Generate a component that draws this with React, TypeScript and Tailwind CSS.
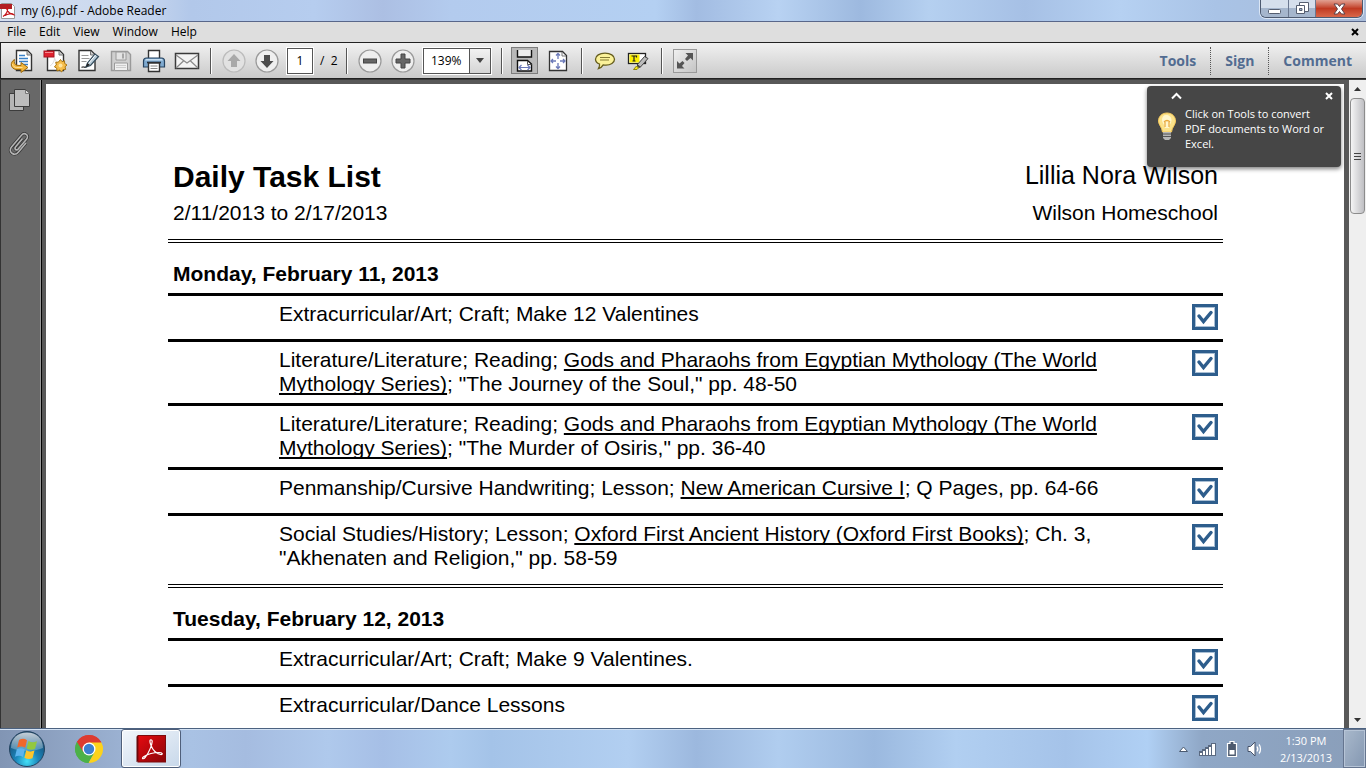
import type { ReactNode } from "react";

type Part = string | { title: string };
type Task = { parts: Part[] };
type Day = { heading: string; tasks: Task[] };

const gods = "Gods and Pharaohs from Egyptian Mythology (The World Mythology Series)";

const days: Day[] = [
  {
    heading: "Monday, February 11, 2013",
    tasks: [
      { parts: ["Extracurricular/Art; Craft; Make 12 Valentines"] },
      { parts: ["Literature/Literature; Reading; ", { title: gods }, '; "The Journey of the Soul," pp. 48-50'] },
      { parts: ["Literature/Literature; Reading; ", { title: gods }, '; "The Murder of Osiris," pp. 36-40'] },
      { parts: ["Penmanship/Cursive Handwriting; Lesson; ", { title: "New American Cursive I" }, "; Q Pages, pp. 64-66"] },
      {
        parts: [
          "Social Studies/History; Lesson; ",
          { title: "Oxford First Ancient History (Oxford First Books)" },
          '; Ch. 3, "Akhenaten and Religion," pp. 58-59',
        ],
      },
    ],
  },
  {
    heading: "Tuesday, February 12, 2013",
    tasks: [
      { parts: ["Extracurricular/Art; Craft; Make 9 Valentines."] },
      { parts: ["Extracurricular/Dance Lessons"] },
    ],
  },
];

const menus = ["File", "Edit", "View", "Window", "Help"];

function Svg({ w, h, children }: { w: number; h: number; children: ReactNode }) {
  return (
    <svg width={w} height={h} viewBox={`0 0 ${w} ${h}`} fill="none" aria-hidden="true" className="shrink-0">
      {children}
    </svg>
  );
}

function ToolButton({ label, children }: { label: string; children: ReactNode }) {
  return (
    <button type="button" aria-label={label} className="flex h-7 w-[33px] shrink-0 items-center justify-center">
      {children}
    </button>
  );
}

function Divider() {
  return <span className="mr-1.5 ml-[7px] h-[26px] w-px shrink-0 bg-[#555] shadow-[1px_0_0_#fff]" />;
}

function PageOutline() {
  return <path d="M6.5 1.5h11l4 4v16h-15z" fill="#fff" stroke="#333" strokeWidth="1.4" />;
}

function ConvertIcon() {
  return (
    <Svg w={24} h={24}>
      <PageOutline />
      <path d="M17 2v4h4" fill="#ccc" stroke="#777" />
      <path d="M9 6.5h6M9 9.5h9M9 12.5h9M12 15.5h6" stroke="#3a82c9" strokeWidth="1.3" />
      <path
        d="M4.500 10.500C0 13 0 19.500 6 20.500h5v3l7-5-7-5v3l-4-.2c-2.500-.8-3.300-3-2.500-5.800z"
        fill="#f2b63c"
        stroke="#9a6a12"
      />
      <path d="M2.500 15c.5 2.500 2 3.300 4 3.500h6" stroke="#ffe29a" />
    </Svg>
  );
}

function CreatePdfIcon() {
  return (
    <Svg w={24} h={24}>
      <path d="M4.500 1.500h12l4 4v16h-16z" fill="#fff" stroke="#333" strokeWidth="1.400" />
      <path d="M16 2v4h4" fill="#ccc" stroke="#777" />
      <path d="M7 17c3-2 4.500-5 4.500-8 1.500 4 3 5.500 6.500 6" stroke="#ddd" />
      <rect x="1" y="2" width="10" height="6" fill="#e02230" stroke="#a51420" />
      <path d="M2 3.500h8" stroke="#f58a90" />
      <path
        d="M17.500 10.500l1.500 2.200 2.500-.9.200 2.700 2.300 1.500-2 1.800.7 2.600-2.700.2-1.400 2.300-2-1.800-2.600.8-.3-2.700-2.300-1.500 2-1.800-.7-2.600 2.700-.2z"
        fill="#f6bd4b"
        stroke="#a97512"
      />
      <circle cx="17.500" cy="16.500" r="2" fill="#ffe5a0" />
    </Svg>
  );
}

function SignIcon() {
  return (
    <Svg w={24} h={24}>
      <path d="M3 1.500h12l4 4v16H3z" fill="#fff" stroke="#333" strokeWidth="1.400" />
      <path d="M14.500 2v4h4" fill="#ccc" stroke="#777" />
      <path d="M5.500 6.500h7M5.500 9.500h8M5.500 12.500h5" stroke="#999" />
      <path d="M5.500 18.500c2.500-2 2.500 1 5-.8" stroke="#444" strokeWidth="1.300" />
      <path d="M10 18l1.500-4 7.500-9 3.500 2.500-8 9z" fill="#b8cbd8" stroke="#344c5c" strokeWidth="1.200" />
      <path d="M12.500 14.500l7-8.500" stroke="#fff" />
      <path d="M10 18l1.500-4 2.500 2z" fill="#222" />
    </Svg>
  );
}

function SaveIcon() {
  return (
    <Svg w={22} h={22}>
      <path d="M1.500 1.500h16l3 3v16h-19z" fill="#cfcfcf" stroke="#9a9a9a" strokeWidth="1.400" />
      <path d="M6 2h10v8H6z" fill="#e3e3e3" stroke="#9a9a9a" />
      <path d="M12 3.500h2v5h-2z" fill="#a6a6a6" />
      <path d="M4.500 13h13v7.500h-13z" fill="#efefef" stroke="#9a9a9a" />
      <path d="M6.500 15.500h9M6.500 17.500h9" stroke="#aaa" strokeDasharray="1 1" />
    </Svg>
  );
}

function PrintIcon() {
  return (
    <Svg w={24} h={24}>
      <path d="M6.500 10v-8.500h11V10" fill="#fff" stroke="#333" strokeWidth="1.400" />
      <path d="M1.500 12c0-2 1-3 3-3h15c2 0 3 1 3 3v6h-21z" fill="#7ea9cf" stroke="#27435f" strokeWidth="1.200" />
      <path d="M3 11.500c.5-1 1-1.500 2-1.500h14c1 0 1.500.5 2 1.500z" fill="#c7dff2" />
      <path d="M5 13.500h14" stroke="#1c2b3a" strokeWidth="1.600" />
      <path d="M6.500 14h11v8.500h-11z" fill="#fff" stroke="#333" strokeWidth="1.400" />
      <path d="M8.500 17h7M8.500 19.500h7" stroke="#888" />
    </Svg>
  );
}

function MailIcon() {
  return (
    <Svg w={26} h={18}>
      <rect x="1.500" y="1.500" width="23" height="15" fill="#f4f4f4" stroke="#3a3a3a" strokeWidth="1.500" />
      <path d="M2 3l11 8 11-8M2 16l8-7.500M24 16l-8-7.500" stroke="#8a8a8a" strokeWidth="1.200" />
    </Svg>
  );
}

function RoundIcon({ kind }: { kind: "up" | "down" | "minus" | "plus" }) {
  const shapes = {
    up: <path d="M12 5l6.500 7H15v6H9v-6H5.500z" fill="#a9a9a9" />,
    down: <path d="M12 19l6.500-7H15V6H9v6H5.500z" fill="#4d4d4d" />,
    minus: <rect x="5.500" y="10" width="13" height="4" fill="#666" stroke="#444" />,
    plus: <path d="M10 5h4v5h5v4h-5v5h-4v-5H5v-4h5z" fill="#666" stroke="#444" />,
  };
  return (
    <Svg w={24} h={24}>
      <circle cx="12" cy="12" r="11" fill={kind === "up" ? "#e2e2e2" : "#efefef"} stroke={kind === "up" ? "#bbb" : "#999"} strokeWidth="1.200" />
      {shapes[kind]}
    </Svg>
  );
}

function Toolbar() {
  return (
    <div className="flex h-[37px] shrink-0 items-center border-y border-l border-[#222] bg-linear-to-b from-[#f1f1f1] to-[#cacaca] pl-1">
      <ToolButton label="Convert file"><ConvertIcon /></ToolButton>
      <ToolButton label="Create PDF"><CreatePdfIcon /></ToolButton>
      <ToolButton label="Sign document"><SignIcon /></ToolButton>
      <ToolButton label="Save"><SaveIcon /></ToolButton>
      <ToolButton label="Print"><PrintIcon /></ToolButton>
      <ToolButton label="Email"><MailIcon /></ToolButton>
      <Divider />
      <ToolButton label="Previous page"><RoundIcon kind="up" /></ToolButton>
      <ToolButton label="Next page"><RoundIcon kind="down" /></ToolButton>
      <input
        aria-label="Page number"
        defaultValue="1"
        className="ml-1 h-[26px] w-[26px] shrink-0 border border-[#555] bg-white text-center text-xs shadow-[0_0_0_1px_#fff]"
      />
      <span className="ml-[7px] w-[19px] shrink-0 text-xs whitespace-pre">/  2</span>
      <Divider />
      <ToolButton label="Zoom out"><RoundIcon kind="minus" /></ToolButton>
      <ToolButton label="Zoom in"><RoundIcon kind="plus" /></ToolButton>
      <div className="ml-1 grid h-[26px] w-[68px] shrink-0 grid-cols-[45px_1fr] border border-[#555] bg-white shadow-[0_0_0_1px_#fff]">
        <select
          aria-label="Zoom level"
          className="col-span-2 col-start-1 row-start-1 appearance-none bg-transparent pl-[7px] text-xs"
        >
          <option>139%</option>
        </select>
        <span className="pointer-events-none col-start-2 row-start-1 flex items-center justify-center border-l border-[#555] bg-linear-to-b from-[#f2f2f2] to-[#d5d5d5]">
          <Svg w={8} h={5}><path d="M0 0h8L4 5z" fill="#444" /></Svg>
        </span>
      </div>
      <span className="w-[3px] shrink-0" />
      <Divider />
      <ToolButton label="Scrolling pages">
        <span className="flex size-[27px] items-center justify-center border border-[#7d7d7d] bg-[#b9b9b9]">
          <Svg w={19} h={23}>
            <path d="M2.500 1v7h14V1" fill="#eee" stroke="#111" strokeWidth="1.400" />
            <path d="M2.500 22V11.500h10l4 3.500v7z" fill="#fff" stroke="#111" strokeWidth="1.400" />
            <path d="M12.500 12v3.500h4" stroke="#555" />
            <path d="M4 18.500h11M6.500 16l-2.500 2.500L6.500 21M12.500 16l2.500 2.500-2.500 2.500" stroke="#6b79b8" strokeWidth="1.200" />
          </Svg>
        </span>
      </ToolButton>
      <ToolButton label="Fit one full page">
        <Svg w={20} h={22}>
          <path d="M1.500 1.500h13l4 4v15h-17z" fill="#fff" stroke="#333" strokeWidth="1.300" />
          <path d="M14 2v4h4" stroke="#777" />
          <path
            d="M10 3.500V9M10 13v5.500M3 11h5M12 11h5M8 5.500l2-2 2 2M8 16.500l2 2 2-2M5 9l-2 2 2 2M15 9l2 2-2 2"
            stroke="#6b79b8"
            strokeWidth="1.300"
          />
        </Svg>
      </ToolButton>
      <Divider />
      <ToolButton label="Add sticky note">
        <Svg w={22} h={18}>
          <path
            d="M11 1.200c5.500 0 9.500 2.500 9.500 6s-4 6-8.500 6c-1 0-2-.1-2.800-.3C8 15 6.500 16 4.500 16.500c1-1.500 1.300-3 1-4.500C3 11 1.500 9.300 1.500 7.200c0-3.500 4-6 9.500-6z"
            fill="#fbf29a"
            stroke="#665e1e"
            strokeWidth="1.300"
          />
          <path d="M6 5.500h10M6 8h9" stroke="#857c34" strokeWidth="1.200" />
        </Svg>
      </ToolButton>
      <ToolButton label="Highlight text">
        <Svg w={22} h={20}>
          <rect x="1.500" y="2.500" width="17" height="10" fill="#fff" stroke="#222" strokeWidth="1.300" />
          <path d="M2.500 3.500h10v8h-10z" fill="#fcf000" />
          <path d="M4.500 5h5v1.500M7 5v5M5.500 10h3" stroke="#222" strokeWidth="1.200" />
          <path d="M10 14l7.500-8.500 3.500 2-8 9z" fill="#bbb" stroke="#444" />
          <path d="M10 13l4 3-4 1.500z" fill="#444" />
          <path d="M6.500 18.500l3-3.500 2 2-1.500 1.500z" fill="#f4e81a" stroke="#8f8610" />
        </Svg>
      </ToolButton>
      <Divider />
      <ToolButton label="Read mode">
        <span className="flex size-6 items-center justify-center border border-[#999] bg-linear-to-br from-[#f0f0f0] to-[#c4c4c4]">
          <Svg w={20} h={20}>
            <path d="M10.500 2H18v7.500l-2.500-2.500-3.500 3-2-2 3-3.500zM9.500 17.500H2V10l2.500 2.500 3-2.500 2 2-2.500 3z" fill="#555" />
          </Svg>
        </span>
      </ToolButton>
      <nav aria-label="Panes" className="ml-auto flex h-7 text-sm font-bold text-[#526c91]">
        <button type="button" className="px-3.5">Tools</button>
        <button type="button" className="border-x border-dotted border-[#555] px-3.5">Sign</button>
        <button type="button" className="px-3.5">Comment</button>
      </nav>
    </div>
  );
}

function TitleBar() {
  return (
    <header className="flex h-[22px] shrink-0 items-start justify-between border-b border-[#59678a] bg-[linear-gradient(90deg,#d5dff0_0,#c9d7ee_10%,#b2c8ea_14%,#b6cdef_23%,#acbfe3_28%,#b3cbee_33%,#b4d0f2_48%,#a2bce2_51%,#b8d2f2_57%,#9db9df_63%,#b5d0f0_68%,#a6c0e5_75%,#b6d1f2_82%,#a9c3e6_89%,#a9bcd9_100%)]">
      <div className="flex h-[21px] items-center gap-[5px]">
        <Svg w={16} h={18}>
          <path d="M1.500 1.500h10l3 3v12h-13z" fill="#fff" stroke="#999" />
          <path d="M0 2h12v5H0z" fill="#b11f24" />
          <path d="M3 14.500c3.500-2 5-6 4.500-9-.5-1.500-1.500 0-.5 2 1.500 3.500 3 4.500 6.500 5-1.500-1.500-6-.5-8.500 1" stroke="#c4161c" strokeWidth="1.300" />
        </Svg>
        <h1 className="text-xs">my (6).pdf - Adobe Reader</h1>
      </div>
      <div className="mr-[3px] flex h-[18px] overflow-hidden rounded-b-md border border-t-0 border-[#4d5a70] shadow-[0_0_0_1px_#dbe6f5]">
        <button type="button" aria-label="Minimize" className="flex w-7 items-center justify-center border-r border-[#6b7890] bg-linear-to-b from-[#d5dfec] from-50% to-[#a5b6cd] to-50%">
          <Svg w={13} h={11}><rect x=".5" y="6.500" width="12" height="4" rx="1" fill="#fff" stroke="#555e70" /></Svg>
        </button>
        <button type="button" aria-label="Restore" className="flex w-[27px] items-center justify-center border-r border-[#6b7890] bg-linear-to-b from-[#d5dfec] from-50% to-[#a5b6cd] to-50%">
          <Svg w={13} h={13}>
            <path d="M3.500 .5h9v9h-9z" fill="#fff" stroke="#555e70" />
            <path d="M.5 3.500h8v8h-8z" fill="#fff" stroke="#555e70" />
            <path d="M3.500 6.500h2.500v2H3.500z" fill="#9db0c9" stroke="#555e70" />
          </Svg>
        </button>
        <button type="button" aria-label="Close" className="flex w-[46px] items-center justify-center bg-linear-to-b from-[#e0a092] from-0% via-[#c03a22] via-50% to-[#d9674a]">
          <Svg w={13} h={12}>
            <path d="M1 1h3.500l2 2.500L8.500 1H12L8.500 6l3.500 5H8.500l-2-2.500-2 2.500H1l3.500-5z" fill="#fff" stroke="#5c4048" />
          </Svg>
        </button>
      </div>
    </header>
  );
}

function CloseGlyph() {
  return <Svg w={8} h={8}><path d="M1 1l6 6M7 1L1 7" stroke="currentColor" strokeWidth="2" /></Svg>;
}

function MenuBar() {
  return (
    <nav aria-label="Menu" className="flex h-5 shrink-0 items-center bg-[#dedede] pr-[7px] text-xs">
      <ul className="flex gap-[13px] pl-[7px]">
        {menus.map((m) => (
          <li key={m}><button type="button" className="block leading-4">{m}</button></li>
        ))}
      </ul>
      <button type="button" aria-label="Close document" className="ml-auto"><CloseGlyph /></button>
    </nav>
  );
}

function TaskRow({ id, parts }: { id: string; parts: Part[] }) {
  return (
    <li className="flex min-h-[46px] justify-between border-t-[3px] border-black pr-[5px] pl-[111px]">
      <label htmlFor={id} className="max-w-[841px] pt-1.5 pb-[7px] leading-6">
        {parts.map((p, i) =>
          typeof p === "string" ? (
            p
          ) : (
            <u key={i} className="decoration-2 underline-offset-2 [text-decoration-skip-ink:none]">{p.title}</u>
          ),
        )}
      </label>
      <span className="mt-2 grid size-[26px] shrink-0">
        <input
          id={id}
          type="checkbox"
          defaultChecked
          className="peer col-start-1 row-start-1 size-[26px] appearance-none border-[3px] border-[#2d5d8c] bg-white shadow-[inset_0_0_0_1px_#a9bfd4]"
        />
        <svg
          viewBox="0 0 26 26"
          className="pointer-events-none invisible col-start-1 row-start-1 size-[26px] peer-checked:visible"
          aria-hidden="true"
        >
          <path d="M7 12l4.500 5.500L19 8.500" fill="none" stroke="#2d5d8c" strokeWidth="3.500" strokeLinecap="round" />
        </svg>
      </span>
    </li>
  );
}

function DoubleRule() {
  return <div className="h-1 border-y border-black" />;
}

function DocumentPage() {
  return (
    <article className="min-h-full bg-white pt-[74px] pr-[121px] pl-[122px] font-['Liberation_Sans',Arial,sans-serif] text-[21px] leading-6 text-black">
      <header className="flex justify-between pr-[5px] pb-3.5 pl-[5px]">
        <div>
          <h2 className="mb-[5px] text-[30px] leading-[38px] font-bold">Daily Task List</h2>
          <p>2/11/2013 to 2/17/2013</p>
        </div>
        <div className="text-right">
          <p className="mb-[9px] text-[25px] leading-[34px]">Lillia Nora Wilson</p>
          <p>Wilson Homeschool</p>
        </div>
      </header>
      {days.map((day, d) => (
        <section key={day.heading} className="pb-[7px]">
          <DoubleRule />
          <h3 className="pt-[19px] pb-[7px] pl-[5px] font-bold">{day.heading}</h3>
          <ul>
            {day.tasks.map((t, i) => (
              <TaskRow key={i} id={`task-${d}-${i}`} parts={t.parts} />
            ))}
          </ul>
        </section>
      ))}
    </article>
  );
}

function Tip() {
  return (
    <aside className="absolute top-1.5 right-[25px] h-[81px] w-[194px] rounded bg-[#464646] text-white shadow-[0_2px_4px_rgba(0,0,0,0.5)]">
      <div className="flex items-center justify-between pt-1.5 pr-2 pl-6">
        <button type="button" aria-label="Collapse tip">
          <Svg w={11} h={8}><path d="M1 6.500l4.500-4.500L10 6.500" stroke="#fff" strokeWidth="2" /></Svg>
        </button>
        <button type="button" aria-label="Close tip"><CloseGlyph /></button>
      </div>
      <div className="flex gap-2 pl-[10px]">
        <Svg w={20} h={42}>
          <g transform="translate(0 12)">
            <path d="M10 1c5 0 8.500 3.500 8.500 8 0 4-3.500 6-4 11H5.500c-.5-5-4-7-4-11C1.500 4.500 5 1 10 1z" fill="#fbe28a" stroke="#f6c95b" />
            <path d="M9 3c3 0 5.500 2 5.500 5s-2 4-2.500 8H8c-.5-4-3-5-3-8s1.500-5 4-5z" fill="#fff6cc" />
            <path d="M7 10c2-2 4-2 6 0M8 10v5M12 10v5" stroke="#e9a93c" strokeWidth="1.200" />
            <path d="M6 20h8v6l-2 2H8l-2-2z" fill="#b5b5b5" />
            <path d="M6 22h8M6 24.500h8" stroke="#555" />
          </g>
        </Svg>
        <p className="pt-1.5 text-[11px] leading-[15px]">
          Click on Tools to convert
          <br />
          PDF documents to Word or
          <br />
          Excel.
        </p>
      </div>
    </aside>
  );
}

function SideRail() {
  return (
    <nav aria-label="Navigation panes" className="flex w-[42px] shrink-0 flex-col items-center gap-5 border-r border-l border-r-black border-l-[#333] bg-[#686868] pt-2 pr-1 shadow-[inset_-1px_0_0_#999]">
      <button type="button" aria-label="Page thumbnails">
        <Svg w={22} h={24}>
          <path d="M1.500 5.500h14v17h-14z" fill="#b5b5b5" stroke="#3c3c3c" />
          <path d="M6.500 1.500h11l4 4v13h-15z" fill="#bdbdbd" stroke="#3c3c3c" />
          <path d="M17.500 2v3.500h4" fill="#ddd" stroke="#777" />
        </Svg>
      </button>
      <button type="button" aria-label="Attachments">
        <Svg w={22} h={24}>
          <path
            d="M14.500 6.500l-7 8.500c-1.500 2 1 4 2.500 2.200l8.500-10c3-4-2-7.500-5-4L3.500 15c-4 5 3 10 7 5l7.500-9"
            stroke="#333"
            strokeWidth="3"
          />
          <path
            d="M14.500 6.500l-7 8.500c-1.500 2 1 4 2.500 2.200l8.500-10c3-4-2-7.500-5-4L3.500 15c-4 5 3 10 7 5l7.500-9"
            stroke="#b4b4b4"
            strokeWidth="1.600"
          />
        </Svg>
      </button>
    </nav>
  );
}

function Scrollbar() {
  return (
    <div className="flex w-[17px] shrink-0 flex-col items-center bg-[#efefef] pt-[7px] pb-1.5">
      <Svg w={7} h={4}><path d="M0 4h7L3.500 0z" fill="#333" /></Svg>
      <div className="mt-[7px] flex h-[116px] w-[15px] flex-col items-center justify-center gap-0.5 rounded-sm border border-[#8c8c8c] bg-linear-to-r from-[#f5f5f5] to-[#bfbfc3]">
        <span className="h-px w-[7px] bg-[#444]" />
        <span className="h-px w-[7px] bg-[#444]" />
        <span className="h-px w-[7px] bg-[#444]" />
      </div>
      <span className="grow" />
      <Svg w={7} h={4}><path d="M0 0h7L3.500 4z" fill="#333" /></Svg>
    </div>
  );
}

function StartOrb() {
  return (
    <Svg w={38} h={38}>
      <defs>
        <radialGradient id="orb" cx="50%" cy="85%" r="80%">
          <stop offset="0" stopColor="#43e0f7" />
          <stop offset=".4" stopColor="#1b86bb" />
          <stop offset="1" stopColor="#174268" />
        </radialGradient>
        <linearGradient id="shine" x1="0" y1="0" x2="0" y2="1">
          <stop offset="0" stopColor="#fff" stopOpacity=".75" />
          <stop offset="1" stopColor="#fff" stopOpacity=".2" />
        </linearGradient>
      </defs>
      <circle cx="19" cy="19" r="17.500" fill="url(#orb)" stroke="#23435f" />
      <path d="M3 18C3 8 10 2.500 19 2.500S35 8 35 18c-9 4-23 4-32 0z" fill="url(#shine)" />
      <path d="M11 10c3-1.600 5.500-1.500 8 .2l-1.800 7.600c-2.600-1.600-5.200-1.600-8-.2z" fill="#f0672a" />
      <path d="M20.500 11c2.800 1.600 5.500 1.600 8.500.3l-2 7.700c-2.700 1.200-5.500 1-8.300-.4z" fill="#93c83e" />
      <path d="M8.800 19.200c2.800-1.400 5.400-1.300 8 .2L15 27c-2.600-1.600-5.200-1.600-8-.2z" fill="#5cb4ee" />
      <path d="M18.200 20.200c2.800 1.500 5.600 1.600 8.300.4l-2 7.600c-2.700 1.200-5.400 1-8.100-.4z" fill="#fcc52c" />
    </Svg>
  );
}

function ChromeIcon() {
  return (
    <Svg w={30} h={30}>
      <path d="M15 15L2.900 8A14 14 0 0127.100 8z" fill="#dd3b30" />
      <path d="M15 15L2.900 8A14 14 0 0014.500 29l6-10.500z" fill="#4cb148" />
      <path d="M15 15l5.500 3.500-6 10.500A14 14 0 0027.100 8H15z" fill="#fcd21c" />
      <path d="M15 8.500h12.400A14 14 0 002.900 8l6.300 10L15 15z" fill="#dd3b30" />
      <path d="M2.900 8L9 18.500l6 1-.5 9.500A14 14 0 012.900 8z" fill="#4cb148" />
      <circle cx="15" cy="15" r="6.500" fill="#fff" />
      <circle cx="15" cy="15" r="5.200" fill="#3d7fd0" />
    </Svg>
  );
}

function ReaderIcon() {
  return (
    <Svg w={30} h={28}>
      <defs>
        <linearGradient id="reader" x1="0" y1="0" x2="1" y2="1">
          <stop offset="0" stopColor="#e60a10" />
          <stop offset="1" stopColor="#8a0508" />
        </linearGradient>
      </defs>
      <path d="M.5 1.500L3 0v26l-2.500 1z" fill="#5e0406" />
      <rect x="2" y=".5" width="27.500" height="26.500" fill="url(#reader)" stroke="#7d0b0d" />
      <path
        d="M15.500 5c-2-1-2 2-.5 5.500 2 5 5 8 9.500 9 3 .3 2-2-1.500-2-5.500 0-11 1.500-15 4-3 2-1 3.500 1.500.5C13 17.500 16 10 16.200 6.500c0-.8-.2-1.200-.7-1.500z"
        stroke="#fff"
        strokeWidth="1.200"
      />
    </Svg>
  );
}

function Taskbar() {
  return (
    <footer className="flex h-10 shrink-0 items-stretch border-t border-[#4c6280] bg-[linear-gradient(90deg,#8195b4_0,#93a8c8_6%,#a9c2e4_14%,#a5bce0_18%,#afc9ec_24%,#a6bfe6_28%,#adcbee_33%,#a4c3e8_36%,#b2cff1_46%,#9cb8de_51%,#b0cdef_57%,#9bb9df_64%,#b1cff1_70%,#a5c3e9_78%,#b0d0f4_84%,#8fa7c6_88%,#8a9eb9_100%)] shadow-[inset_0_1px_0_#d3e2f4]">
      <button type="button" aria-label="Start" className="ml-2 flex items-center"><StartOrb /></button>
      <button type="button" aria-label="Google Chrome" className="ml-7 flex items-center"><ChromeIcon /></button>
      <button type="button" aria-label="Adobe Reader" className="ml-[17px] flex w-[60px] items-center justify-center rounded-[3px] border border-[#4f5f7a] bg-linear-to-br from-[#f2f6fb] to-[#c8d8ea] shadow-[inset_0_0_0_1px_#fff]">
        <ReaderIcon />
      </button>
      <div className="ml-auto flex items-center">
        <button type="button" aria-label="Show hidden icons">
          <Svg w={9} h={6}><path d="M.5 5.500L4.500 1l4 4.500z" fill="#fff" stroke="#4b5a70" /></Svg>
        </button>
        <span className="ml-[11px]">
          <Svg w={18} h={14}>
            <path d="M0 9h3V7h3V5h3V3h3V1h5v13H0z" fill="#5a6980" />
            <path d="M1 11h2v2H1zM4 9h2v4H4zM7 7h2v6H7zM10 5h2v8h-2zM13 2h3v11h-3z" fill="#fff" />
          </Svg>
        </span>
        <span className="ml-[9px]">
          <Svg w={12} h={18}>
            <path d="M4 1.500h4v2h2.500v13h-9v-13H4z" fill="#4d5a6e" stroke="#fff" strokeWidth="1.200" />
            <path d="M3.500 10h5v4.500h-5z" fill="#fff" />
          </Svg>
        </span>
        <span className="ml-[9px]">
          <Svg w={16} h={16}>
            <path d="M1 5.500h2.500L8 1v14l-4.500-4.500H1z" fill="#fff" stroke="#46536a" />
            <path d="M10 5.500c1 1.500 1 3.500 0 5M12 3.500c2 2.500 2 6.500 0 9" stroke="#fff" strokeWidth="1.300" />
          </Svg>
        </span>
        <time dateTime="2013-02-13T13:30" className="ml-[17px] flex flex-col items-center text-[11px] leading-[17px] text-white">
          <span>1:30 PM</span>
          <span>2/13/2013</span>
        </time>
      </div>
      <button type="button" aria-label="Show desktop" className="ml-[11px] w-[23px] border border-[#65758f] bg-linear-to-br from-[#a9b9cc] to-[#8497b1] shadow-[inset_0_0_0_1px_#b6c4d6]" />
    </footer>
  );
}

export default function App() {
  return (
    <div className="flex h-screen flex-col overflow-hidden bg-[#585858] font-['Open_Sans','Noto_Sans',sans-serif] text-black">
      <TitleBar />
      <MenuBar />
      <Toolbar />
      <div className="relative flex min-h-0 grow border-t border-[#3c3c3c]">
        <SideRail />
        <main className="min-w-0 grow overflow-hidden pt-1 pr-[5px] pl-1">
          <DocumentPage />
        </main>
        <Scrollbar />
        <Tip />
      </div>
      <Taskbar />
    </div>
  );
}
